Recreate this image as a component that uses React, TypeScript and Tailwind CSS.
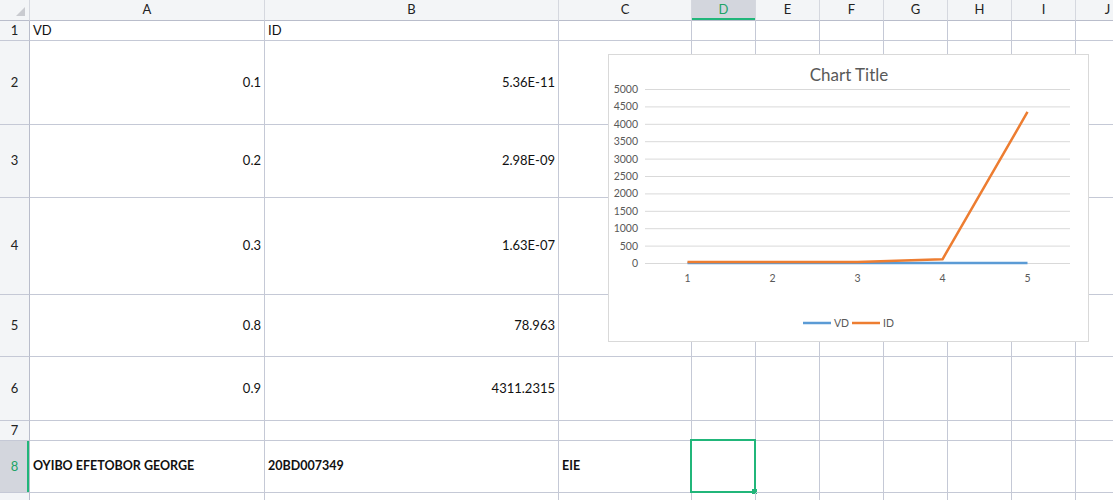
import React from 'react';

// Sheet geometry taken from the screenshot (each size includes its 1px grid line)
const colWidths = [30, 235, 294, 133, 64, 64, 64, 64, 64, 64, 64];
const colNames = ['', 'A', 'B', 'C', 'D', 'E', 'F', 'G', 'H', 'I', 'J'];
const rowHeights = [20, 84, 73, 97, 62, 64, 20, 52, 30];

type Cell = { text: string; align?: 'left' | 'right'; bold?: boolean };

const data: Record<number, Cell[]> = {
  1: [{ text: 'VD' }, { text: 'ID' }],
  2: [{ text: '0.1', align: 'right' }, { text: '5.36E-11', align: 'right' }],
  3: [{ text: '0.2', align: 'right' }, { text: '2.98E-09', align: 'right' }],
  4: [{ text: '0.3', align: 'right' }, { text: '1.63E-07', align: 'right' }],
  5: [{ text: '0.8', align: 'right' }, { text: '78.963', align: 'right' }],
  6: [{ text: '0.9', align: 'right' }, { text: '4311.2315', align: 'right' }],
  8: [
    { text: 'OYIBO EFETOBOR GEORGE', bold: true },
    { text: '20BD007349', bold: true },
    { text: 'EIE', bold: true },
  ],
};

const VD = [0.1, 0.2, 0.3, 0.8, 0.9];
const ID = [5.36e-11, 2.98e-9, 1.63e-7, 78.963, 4311.2315];

const Chart: React.FC = () => {
  const x0 = 36;
  const x1 = 461;
  const yTop = 34;
  const yZero = 208;
  const step = (x1 - x0) / 5;
  const px = (i: number) => x0 + step * (i + 0.5);
  const py = (v: number) => yZero - (v / 5000) * (yZero - yTop);
  const ticks = [5000, 4500, 4000, 3500, 3000, 2500, 2000, 1500, 1000, 500, 0];
  const font = "Lato, 'Liberation Sans', sans-serif";

  return (
    <div className="absolute left-[608px] top-[54px] w-[481px] h-[288px] bg-white border border-[#d9d9d9]">
      <svg width="479" height="286" className="block">
        <text x="240" y="26" textAnchor="middle" fontSize="17" fill="#595959" fontFamily={font}>
          Chart Title
        </text>
        {ticks.map((t) => (
          <g key={t}>
            <line x1={x0} x2={x1} y1={py(t) + 0.5} y2={py(t) + 0.5} stroke="#d9d9d9" strokeWidth="1" />
            <text x="29" y={py(t) + 4} textAnchor="end" fontSize="10.5" fill="#595959" fontFamily={font}>
              {t}
            </text>
          </g>
        ))}
        {[1, 2, 3, 4, 5].map((n, i) => (
          <text key={n} x={px(i)} y="227" textAnchor="middle" fontSize="10.5" fill="#595959" fontFamily={font}>
            {n}
          </text>
        ))}
        <polyline
          points={VD.map((v, i) => `${px(i)},${py(v)}`).join(' ')}
          fill="none"
          stroke="#5b9bd5"
          strokeWidth="2.5"
          strokeLinejoin="round"
        />
        <polyline
          points={ID.map((v, i) => `${px(i)},${py(v) - 1}`).join(' ')}
          fill="none"
          stroke="#ed7d31"
          strokeWidth="2.5"
          strokeLinejoin="round"
        />
        {/* legend */}
        <line x1="194" x2="222" y1="268" y2="268" stroke="#5b9bd5" strokeWidth="2.5" />
        <text x="225" y="272" fontSize="10.5" fill="#595959" fontFamily={font}>VD</text>
        <line x1="243" x2="271" y1="268" y2="268" stroke="#ed7d31" strokeWidth="2.5" />
        <text x="274" y="272" fontSize="10.5" fill="#595959" fontFamily={font}>ID</text>
      </svg>
    </div>
  );
};

export default function App() {
  return (
    <div className="relative w-[1113px] h-[500px] overflow-hidden bg-white font-['Lato','Liberation_Sans',sans-serif] text-[13px] text-[#111]">
      {/* column headers */}
      <div className="flex h-[21px]">
        {colNames.map((name, i) => {
          const selected = name === 'D';
          return (
            <div
              key={i}
              style={{ width: colWidths[i] }}
              className={`shrink-0 flex items-center justify-center border-r border-b border-r-[#d5d8df] border-b-[#b9bdcb] ${
                selected ? 'bg-[#d3d6dd] text-[#21a366] shadow-[inset_0_-2px_0_#21b67a]' : 'bg-[#f3f5f7] text-[#222]'
              }`}
            >
              {i === 0 ? (
                <div className="w-full h-full relative">
                  <div className="absolute right-[4px] bottom-[4px] w-0 h-0 border-l-[9px] border-l-transparent border-b-[9px] border-b-[#c9cbd0]" />
                </div>
              ) : (
                name
              )}
            </div>
          );
        })}
      </div>

      {/* rows */}
      {rowHeights.map((h, r) => {
        const rowNum = r + 1;
        const cells = data[rowNum] || [];
        const selRow = rowNum === 8;
        return (
          <div key={rowNum} className="flex" style={{ height: h }}>
            <div
              style={{ width: colWidths[0] }}
              className={`shrink-0 flex items-center justify-center border-r border-b border-r-[#b9bdcb] border-b-[#c5c9d6] ${
                selRow ? 'bg-[#d3d6dd] text-[#21a366] shadow-[inset_-2px_0_0_#21b67a]' : 'bg-[#f3f5f7] text-[#222]'
              }`}
            >
              {rowNum}
            </div>
            {colWidths.slice(1).map((w, c) => {
              const cell = cells[c];
              const isSel = selRow && c === 3;
              return (
                <div
                  key={c}
                  style={{ width: w }}
                  className={`shrink-0 relative flex items-center border-r border-b border-[#c5c9d6] px-[3px] whitespace-nowrap ${
                    cell?.align === 'right' ? 'justify-end' : 'justify-start'
                  } ${cell?.bold ? 'font-bold text-[12.5px]' : ''}`}
                >
                  {cell?.text}
                  {isSel && (
                    <div className="absolute -left-[2px] -top-[2px] w-[66px] h-[54px] border-[2px] border-[#21b67a]">
                      <div className="absolute -right-[3px] -bottom-[3px] w-[5px] h-[5px] bg-[#21b67a]" />
                    </div>
                  )}
                </div>
              );
            })}
          </div>
        );
      })}

      <Chart />
    </div>
  );
}
